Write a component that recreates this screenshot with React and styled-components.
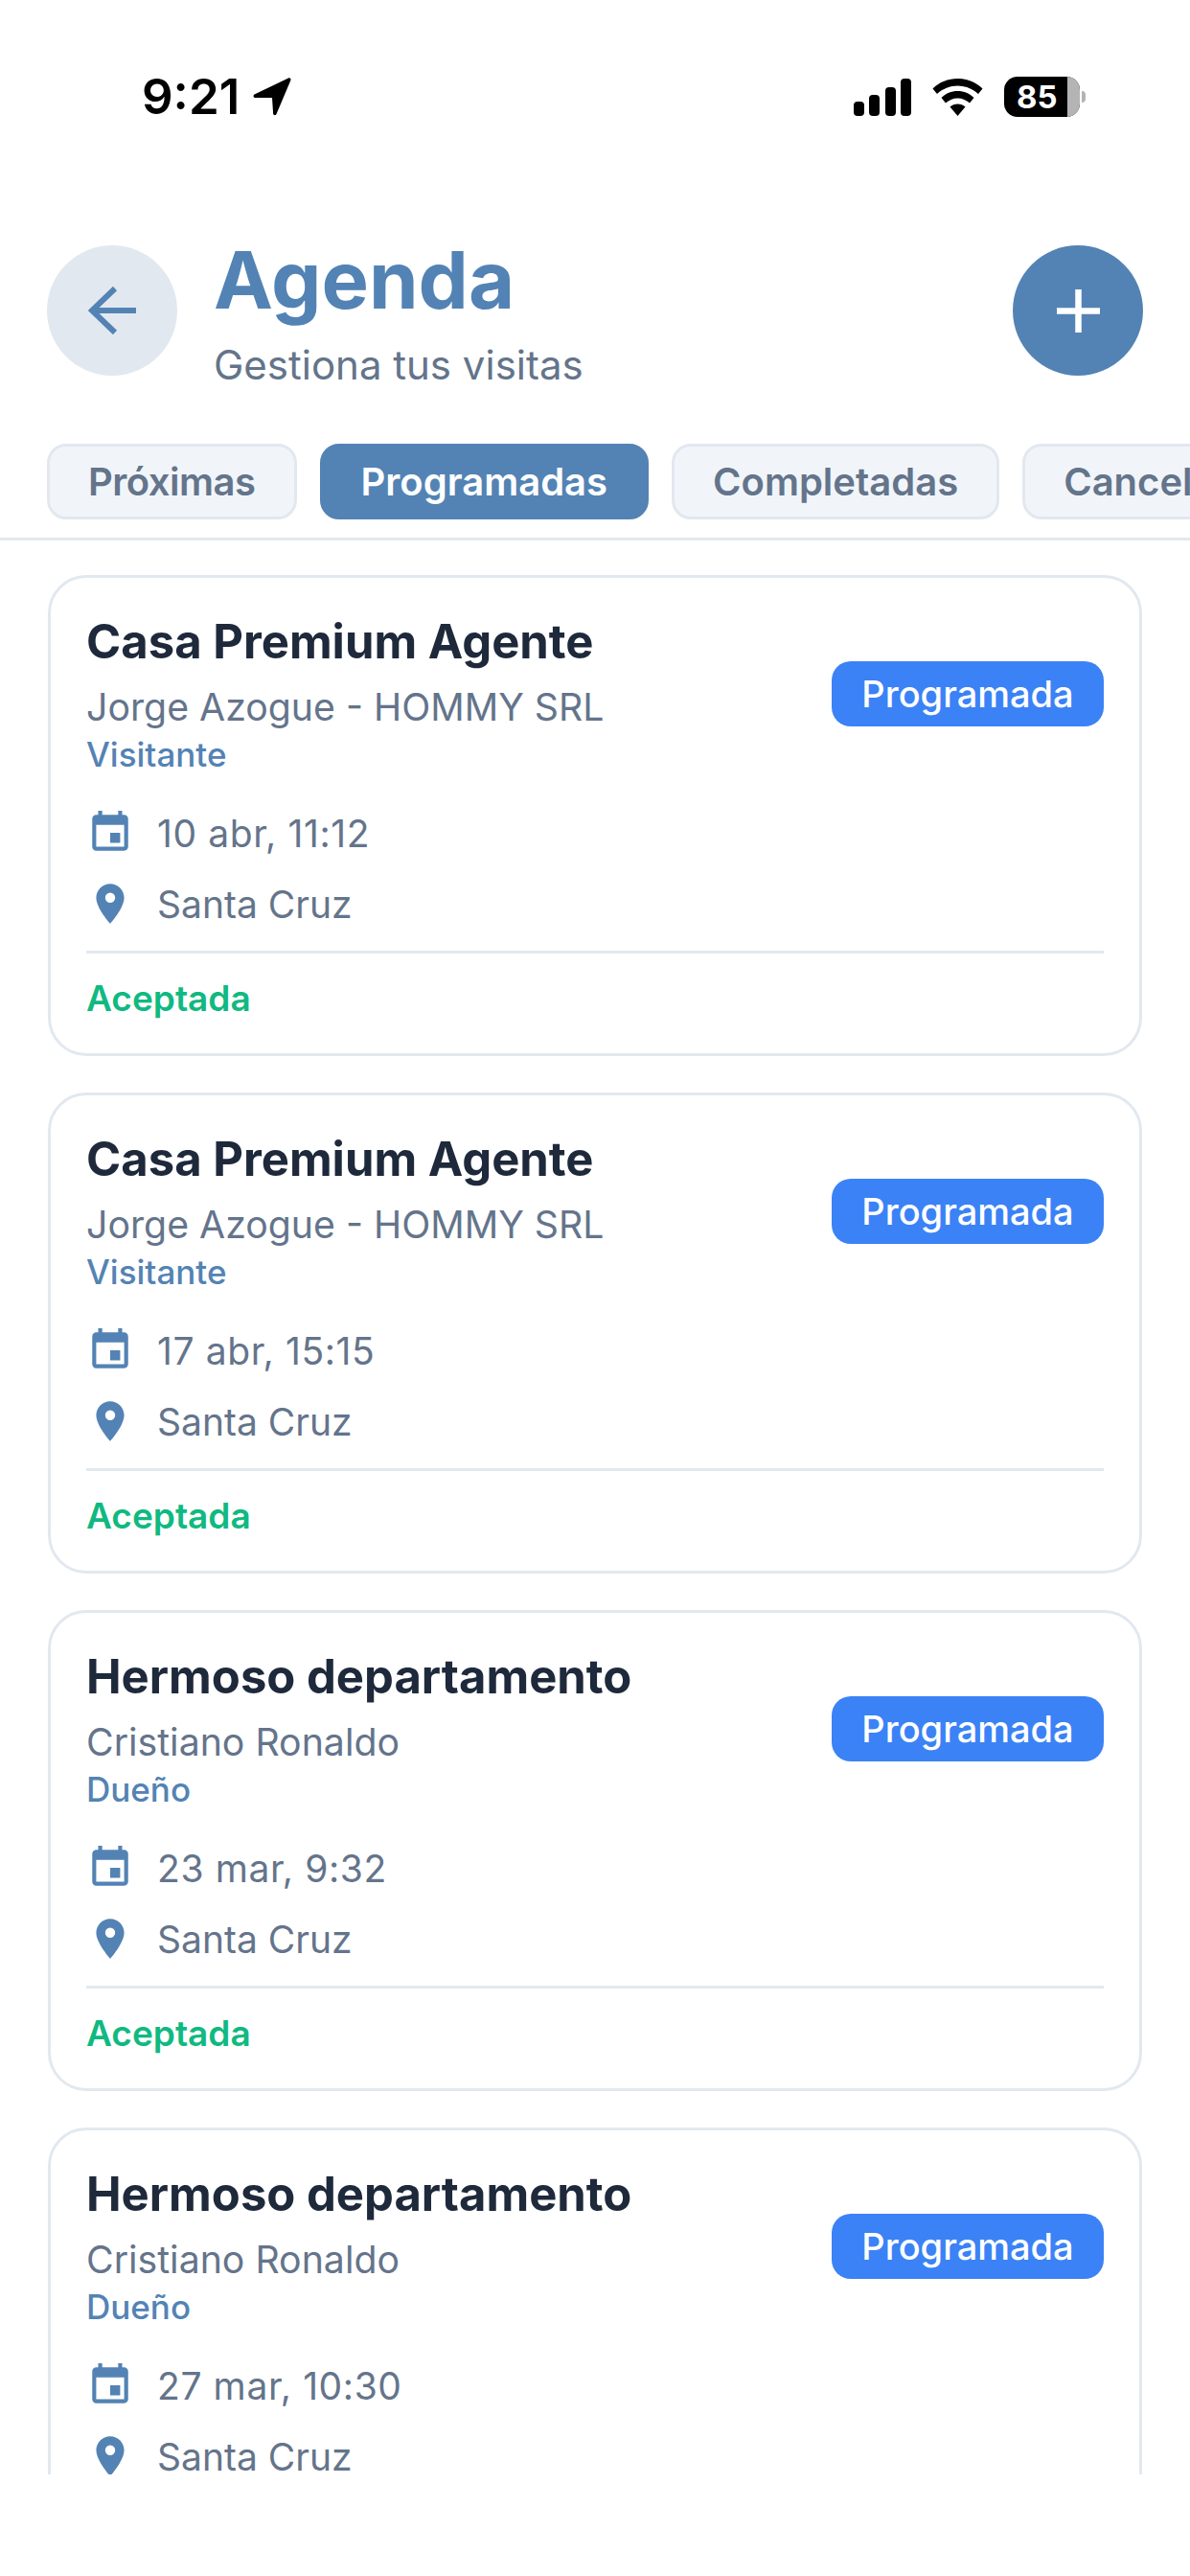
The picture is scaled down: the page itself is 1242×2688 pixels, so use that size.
import React from 'react'
import styled, { createGlobalStyle } from 'styled-components'
import { MdEvent, MdPlace } from 'react-icons/md'

const Global = createGlobalStyle`
  html, body {
    margin: 0;
    padding: 0;
    background: #fff;
  }
  * {
    box-sizing: border-box;
  }
`

const Screen = styled.div`
  width: 1242px;
  height: 2688px;
  overflow: hidden;
  background: #fff;
  font-family: Inter, "Liberation Sans", sans-serif;
  display: flex;
  flex-direction: column;
`

const StatusBar = styled.div`
  height: 256px;
  flex: none;
  padding: 72px 109px 0 148px;
  display: flex;
  justify-content: space-between;
  align-items: flex-start;
`

const Time = styled.div`
  display: flex;
  align-items: center;
  gap: 13px;
  font-size: 51px;
  line-height: 58px;
  font-weight: 600;
  color: #000;
`

const StatusIcons = styled.div`
  display: flex;
  align-items: center;
  height: 58px;
  gap: 22px;
`

const Battery = styled.div`
  position: relative;
  width: 79px;
  height: 42px;
  border-radius: 14px;
  background: #000;
  color: #fff;
  font-size: 33px;
  font-weight: 700;
  line-height: 42px;
  padding-left: 13px;
  overflow: hidden;

  &::after {
    content: '';
    position: absolute;
    right: 0;
    top: 0;
    width: 13px;
    height: 42px;
    background: #b4b4b4;
  }
`

const BatteryCap = styled.div`
  width: 4px;
  height: 12px;
  background: #b4b4b4;
  border-radius: 0 4px 4px 0;
  margin-left: -20px;
`

const Header = styled.div`
  flex: none;
  display: flex;
  align-items: center;
  padding: 0 49px;
  height: 136px;
`

const RoundButton = styled.div`
  flex: none;
  width: 136px;
  height: 136px;
  border-radius: 50%;
  display: flex;
  align-items: center;
  justify-content: center;
  background: ${p => (p.$primary ? '#5383b4' : '#e2e8f0')};
`

const Heading = styled.div`
  flex: 1;
  padding-left: 38px;
`

const PageTitle = styled.div`
  font-size: 83px;
  line-height: 92px;
  font-weight: 700;
  color: #5383b4;
  margin-top: -3px;
`

const PageSubtitle = styled.div`
  font-size: 42px;
  line-height: 50px;
  color: #64748b;
  margin-top: 18px;
  margin-bottom: -7px;
`

const Tabs = styled.div`
  flex: none;
  display: flex;
  gap: 24px;
  padding: 71px 0 19px 49px;
  border-bottom: 3px solid #e2e8f0;
  overflow: hidden;
`

const Tab = styled.div`
  flex: none;
  height: 79px;
  padding: 0 40px;
  display: flex;
  align-items: center;
  border-radius: 20px;
  font-size: 40px;
  font-weight: 600;
  letter-spacing: ${p => (p.$tight ? '-0.5px' : '0')};
  border: 3px solid ${p => (p.$active ? '#5383b4' : '#e2e8f0')};
  background: ${p => (p.$active ? '#5383b4' : '#f1f5f9')};
  color: ${p => (p.$active ? '#fff' : '#64748b')};
`

const List = styled.div`
  height: 2018px;
  flex: none;
  overflow: hidden;
  padding: 36px 50px 0;
  display: flex;
  flex-direction: column;
  gap: 38px;
`

const Card = styled.div`
  flex: none;
  height: 502px;
  border: 3px solid #e2e8f0;
  border-radius: 40px;
  padding: 37px 37px 0;
  background: #fff;
`

const CardTop = styled.div`
  display: flex;
  justify-content: space-between;
  align-items: center;
`

const CardTitle = styled.div`
  font-size: 49px;
  line-height: 60px;
  font-weight: 700;
  color: #1e293b;
`

const Person = styled.div`
  font-size: 39.250px;
  line-height: 50px;
  color: #64748b;
  margin-top: 13px;
`

const Role = styled.div`
  font-size: 35px;
  line-height: 42px;
  font-weight: 500;
  color: #5383b4;
  margin-top: 3px;
`

const Badge = styled.div`
  width: 284px;
  height: 68px;
  border-radius: 20px;
  background: #3b82f6;
  color: #fff;
  font-size: 38px;
  font-weight: 500;
  display: flex;
  align-items: center;
  justify-content: center;
`

const InfoRows = styled.div`
  margin-top: 36px;
  display: flex;
  flex-direction: column;
  gap: 24px;
`

const InfoRow = styled.div`
  display: flex;
  align-items: center;
  gap: 24px;
  height: 50px;
  font-size: 39px;
  letter-spacing: ${p => (p.$date ? '0.6px' : '0')};
  color: #64748b;

  svg {
    flex: none;
    color: #5383b4;
  }
`

const Footer = styled.div`
  margin-top: 24px;
  border-top: 3px solid #e2e8f0;
  padding-top: 25px;
  font-size: 37px;
  line-height: 44px;
  font-weight: 600;
  color: #10b981;
`

const tabs = ['Próximas', 'Programadas', 'Completadas', 'Canceladas']

const visits = [
  { title: 'Casa Premium Agente', person: 'Jorge Azogue - HOMMY SRL', role: 'Visitante', date: '10 abr, 11:12' },
  { title: 'Casa Premium Agente', person: 'Jorge Azogue - HOMMY SRL', role: 'Visitante', date: '17 abr, 15:15' },
  { title: 'Hermoso departamento', person: 'Cristiano Ronaldo', role: 'Dueño', date: '23 mar, 9:32' },
  { title: 'Hermoso departamento', person: 'Cristiano Ronaldo', role: 'Dueño', date: '27 mar, 10:30' }
]

function Signal() {
  return (
    <svg width="60" height="39" viewBox="0 0 60 39" fill="#000">
      <rect x="0" y="24" width="11" height="15" rx="4" />
      <rect x="16" y="17" width="11" height="22" rx="4" />
      <rect x="33" y="9" width="11" height="30" rx="4" />
      <rect x="49" y="0" width="11" height="39" rx="4" />
    </svg>
  )
}

function Wifi() {
  return (
    <svg width="53" height="39" viewBox="0 0 52 39" fill="#000">
      <path d="M0 10.500C7 3.500 16 0 26 0s19 3.500 26 10.500l-4.500 5.500C41.500 10.500 34 7.500 26 7.500S10.500 10.500 4.500 16z" />
      <path d="M9 20c4.500-4.500 10.500-7 17-7s12.500 2.500 17 7l-4.500 5.500c-3.500-3-7.500-5-12.500-5s-9 2-12.500 5z" />
      <path d="M18 29.500c2.200-2 5-3 8-3s5.800 1 8 3L26 39z" />
    </svg>
  )
}

function LocationArrow() {
  return (
    <svg width="42" height="42" viewBox="0 0 42 42" fill="#000">
      <path d="M38 1.500c1.500-.7 3 .7 2.400 2.300L25.500 39c-.8 1.800-3.200 1.500-3.400-.5L21 22H3.500c-2 0-2.700-2.500-1-3.500z" />
    </svg>
  )
}

function ArrowBack() {
  return (
    <svg width="50" height="50" viewBox="0 0 50 50" fill="none" stroke="#5383b4" strokeWidth="6">
      <path d="M50 25H4M28 2 4 25l24 23" />
    </svg>
  )
}

function Plus() {
  return (
    <svg width="45" height="45" viewBox="0 0 45 45" fill="none" stroke="#fff" strokeWidth="6.500">
      <path d="M22.500 0v45M0 22.500h45" />
    </svg>
  )
}

function VisitCard({ visit }) {
  return (
    <Card>
      <CardTop>
        <div>
          <CardTitle>{visit.title}</CardTitle>
          <Person>{visit.person}</Person>
          <Role>{visit.role}</Role>
        </div>
        <Badge>Programada</Badge>
      </CardTop>
      <InfoRows>
        <InfoRow $date>
          <MdEvent size={50} />
          {visit.date}
        </InfoRow>
        <InfoRow>
          <MdPlace size={50} />
          Santa Cruz
        </InfoRow>
      </InfoRows>
      <Footer>Aceptada</Footer>
    </Card>
  )
}

export default function App() {
  return (
    <Screen>
      <Global />
      <StatusBar>
        <Time>
          9:21
          <LocationArrow />
        </Time>
        <StatusIcons>
          <Signal />
          <Wifi />
          <Battery>85</Battery>
          <BatteryCap />
        </StatusIcons>
      </StatusBar>
      <Header>
        <RoundButton>
          <ArrowBack />
        </RoundButton>
        <Heading>
          <PageTitle>Agenda</PageTitle>
          <PageSubtitle>Gestiona tus visitas</PageSubtitle>
        </Heading>
        <RoundButton $primary>
          <Plus />
        </RoundButton>
      </Header>
      <Tabs>
        {tabs.map(t => (
          <Tab key={t} $active={t === 'Programadas'} $tight={t === 'Próximas'}>
            {t}
          </Tab>
        ))}
      </Tabs>
      <List>
        {visits.map((v, i) => (
          <VisitCard key={i} visit={v} />
        ))}
      </List>
    </Screen>
  )
}
